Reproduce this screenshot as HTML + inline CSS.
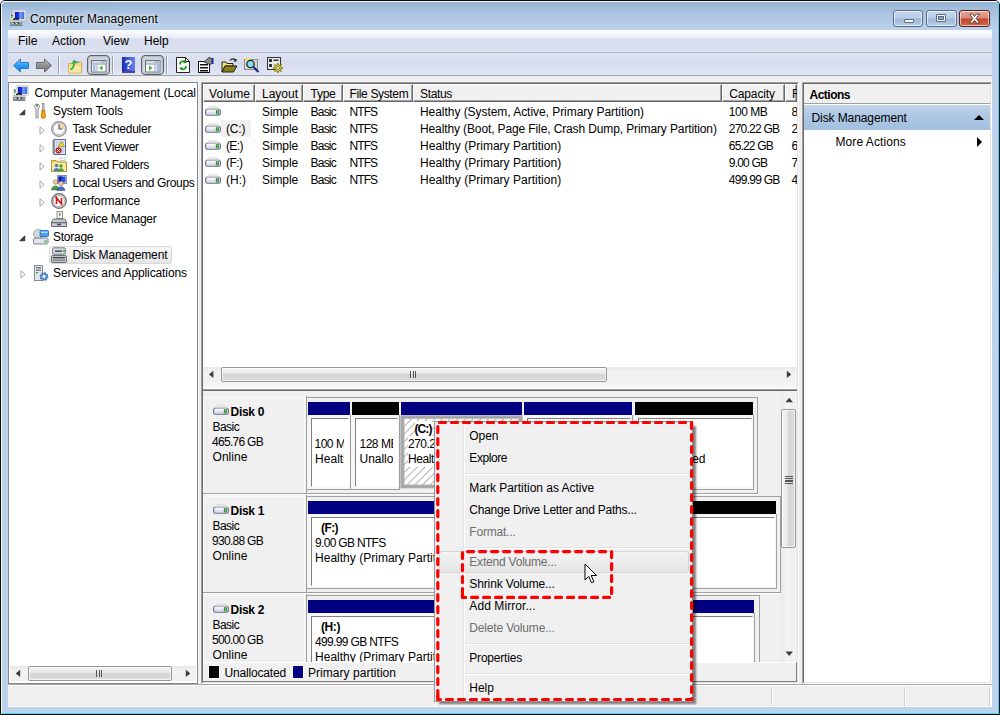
<!DOCTYPE html>
<html><head><meta charset="utf-8"><title>Computer Management</title>
<style>
*{box-sizing:border-box;margin:0;padding:0}
html,body{width:1000px;height:715px;overflow:hidden;background:#fff}
body{font-family:"Liberation Sans",sans-serif;font-size:12px;color:#000;position:relative}
.a{position:absolute}
.t{position:absolute;white-space:pre;line-height:16px;height:16px}
#frame{left:0;top:0;width:1000px;height:715px;border:1px solid #0a0a0a;border-radius:5px 5px 0 0;background:linear-gradient(#96b3d4 0,#a9c3e0 12px,#bdd2ea 30px,#bdd3ec 100%)}
#frame2{left:1px;top:1px;width:998px;height:713px;border:1px solid;border-color:rgba(255,255,255,.92) #46d8f6 #46d8f6 rgba(255,255,255,.92);border-radius:4px 4px 0 0}
#menubar{left:8px;top:30px;width:984px;height:22px;background:linear-gradient(#fdfdfe 0,#e9ecf6 8px,#d8ddee 9px,#dce1f0 100%)}
#mline{left:8px;top:52px;width:984px;height:1px;background:#b6bccc}
#toolbar{left:8px;top:53px;width:984px;height:22px;background:linear-gradient(#dde2f1,#d6dcee 50%,#e1e6f3)}
#tline{left:8px;top:75px;width:984px;height:1px;background:#a0a6b4}
#client{left:8px;top:76px;width:984px;height:631px;background:#f0f0f0}

.cap{top:10px;height:17px;border:1px solid #5b6f8a;border-radius:3px;box-shadow:inset 0 0 0 1px rgba(255,255,255,.6)}
.capb{background:linear-gradient(#c6d8ee 0,#b7cde8 48%,#9dbadb 52%,#b4cce7 100%)}
#cclose{background:linear-gradient(#e5a698 0,#d98978 48%,#c4452c 52%,#d4674b 100%);border-color:#5a1f1a}
.mi{top:33px;font-size:12px;line-height:16px;height:16px}

.tsep{top:56px;width:2px;height:18px;border-left:1px solid #9aa0b0;border-right:1px solid #f4f6fb}
.tbtn{top:55px;width:23px;height:20px;border:1px solid #5c6068;border-radius:4px;background:linear-gradient(#c9cdd6,#dfe2e8);box-shadow:inset 0 0 0 1px #b9bdc6}
.sunk{border:1px solid;border-color:#a0a0a0 #fff #fff #a0a0a0}
.sunk>i{position:absolute;left:0;top:0;right:0;bottom:0;border:1px solid;border-color:#696969 #e3e3e3 #e3e3e3 #696969;background:#fff;display:block}
.hsb{background:linear-gradient(#e9e9e9,#f3f3f3 40%,#f0f0f0)}
.hthumb{border:1px solid #979797;border-radius:2px;background:linear-gradient(#f4f4f4 0,#e6e6e6 45%,#d4d4d4 50%,#dcdcdc 100%);box-shadow:inset 0 0 0 1px rgba(255,255,255,.7)}
.vthumb{border:1px solid #979797;border-radius:2px;background:linear-gradient(90deg,#f4f4f4 0,#e6e6e6 45%,#d4d4d4 50%,#dcdcdc 100%);box-shadow:inset 0 0 0 1px rgba(255,255,255,.7)}
.grip{background:repeating-linear-gradient(90deg,#555 0,#555 1.400px,transparent 1.400px,transparent 2.500px)}
.vgrip{background:repeating-linear-gradient(180deg,#555 0,#555 1.200px,transparent 1.200px,transparent 2.200px)}
.arr{width:0;height:0;border:4px solid transparent}
.hd{top:84px;height:18px;background:#f0f0f0;border:1px solid;border-color:#fff #696969 #696969 #fff;box-shadow:inset -1px -1px 0 #a0a0a0}
.bar{height:13px}
.pc{background:#f6f6f6;border:1px solid #a0a0a0;border-top:0;border-left:0}
.pi{background:#fff;border:1px solid;border-color:#808080 #fff #fff #808080}
.clip{position:absolute;overflow:hidden}
.ln{background:#a0a0a0}
</style></head><body>
<div class="a" id="frame"></div><div class="a" id="frame2"></div>
<div class="a" id="menubar"></div><div class="a" id="mline"></div>
<div class="a" id="toolbar"></div><div class="a" id="tline"></div>
<div class="a" id="client"></div>
<!-- title -->
<svg class="a" style="left:10px;top:10px" width="16" height="16" viewBox="0 0 16 16"><defs><linearGradient id="gscr0" x1="0" y1="0" x2="1" y2="0"><stop offset="0" stop-color="#0a1ab4"/><stop offset=".4" stop-color="#1c3ce0"/><stop offset=".55" stop-color="#7aa0f4"/><stop offset="1" stop-color="#3a62e6"/></linearGradient></defs><rect x="3.200" y=".2" width="12.600" height="10.200" rx=".6" fill="#e9e6dc" stroke="#c9c5b9" stroke-width=".5"/><rect x="4.900" y="1.900" width="9.300" height="7.100" fill="url(#gscr0)"/><rect x=".3" y="4.200" width="3" height="6" fill="#e2e2e2"/><rect x="1" y="4.600" width="1.500" height="1.900" fill="#444"/><rect x=".9" y="6.700" width="2.100" height="1.300" fill="#30e030"/><path d="M3.200 9.900Q5.800 7.500 8.600 9.900" fill="none" stroke="#111" stroke-width="1.300"/><rect x="0" y="10.300" width="12.300" height="5.500" fill="#8c9696"/><rect x="0" y="10.300" width="12.300" height="1.700" fill="#c6cece"/><rect x="3.600" y="12.200" width="1.300" height="2" fill="#2e2e2e"/><rect x="7.600" y="12.200" width="1.300" height="2" fill="#2e2e2e"/><rect x="2.300" y="13" width="1.200" height="1" fill="#eee"/><rect x="6.200" y="13" width="1.200" height="1" fill="#eee"/><rect x="0" y="15.200" width="12.300" height=".6" fill="#5a6a8a"/></svg>
<div class="t" style="left:30px;top:11px;font-size:12px;line-height:16px;height:16px;letter-spacing:.1px;text-shadow:0 0 6px rgba(255,255,255,.9),0 0 3px rgba(255,255,255,.8)">Computer Management</div>
<div class="a cap capb" style="left:893px;width:30px"><div class="a" style="left:10px;top:8px;width:10px;height:4px;background:#fff;border:1px solid #5a6a80;border-radius:1px"></div></div>
<div class="a cap capb" style="left:926px;width:31px"><div class="a" style="left:9px;top:3px;width:10px;height:8px;background:#fff;border:1px solid #5a6a80;border-radius:1px"></div><div class="a" style="left:12px;top:6px;width:4px;height:2px;background:#8aa3c4;border:1px solid #5a6a80;box-sizing:content-box;left:11px;top:5px"></div></div>
<div class="a cap" id="cclose" style="left:959px;width:31px"><svg class="a" style="left:8px;top:2px" width="13" height="11" viewBox="0 0 13 11"><path d="M1.5 1h3l2 2.6 2-2.6h3l-3.4 4.4 3.6 4.6h-3.2l-2-2.7-2 2.7H1.300l3.600-4.600z" fill="#fff" stroke="#5a3a3a" stroke-width=".9"/></svg></div>
<!-- menu -->
<div class="t mi" style="left:18px">File</div>
<div class="t mi" style="left:52px">Action</div>
<div class="t mi" style="left:103px">View</div>
<div class="t mi" style="left:144px">Help</div>
<!-- toolbar -->

<svg class="a" style="left:12px;top:57px" width="18" height="17" viewBox="0 0 18 17"><defs><linearGradient id="gb" x1="0" y1="0" x2="0" y2="1"><stop offset="0" stop-color="#8fd0ff"/><stop offset=".5" stop-color="#2e9bf0"/><stop offset="1" stop-color="#1a74d8"/></linearGradient><linearGradient id="gg" x1="0" y1="0" x2="0" y2="1"><stop offset="0" stop-color="#c8c8c8"/><stop offset=".5" stop-color="#8e8e8e"/><stop offset="1" stop-color="#7a7a7a"/></linearGradient></defs><path d="M1.500 8.500L8.500 2v3.500h8v6h-8V15z" fill="url(#gb)" stroke="#2a7fd0" stroke-width="1"/></svg>
<svg class="a" style="left:35px;top:57px" width="18" height="17" viewBox="0 0 18 17"><path d="M16.500 8.500L9.500 2v3.500h-8v6h8V15z" fill="url(#gg)" stroke="#6a6a6a" stroke-width="1"/></svg>
<div class="a tsep" style="left:58px"></div>
<svg class="a" style="left:68px;top:57px" width="15" height="17" viewBox="0 0 15 17"><path d="M.5 6.500h4.500l1-1.500h7.500v11H.500z" fill="#f3d98a" stroke="#d4b050" stroke-width="1"/><path d="M1 9h12v6.500H1z" fill="#f8e6a8"/><path d="M2.500 12.500c2-1 3.500-3 3.500-6" fill="none" stroke="#35b030" stroke-width="1.800"/><path d="M3.200 6.800L6.200 2.500l3.300 3.800z" fill="#35b030"/><path d="M7 4.500l4 .8" stroke="#4a90e0" stroke-width="1.200"/></svg>
<div class="a tbtn" style="left:87px"></div>
<svg class="a" style="left:91px;top:59px" width="16" height="14" viewBox="0 0 16 14"><rect x=".5" y="1.500" width="14.500" height="11.500" fill="#fff" stroke="#6a7280"/><rect x="1" y="2" width="13.500" height="2.500" fill="#d5d9e2"/><rect x="1" y="4.500" width="13.500" height="1" fill="#8a92a2"/><rect x="10.500" y="2.500" width="1" height="1" fill="#556"/><rect x="12.500" y="2.500" width="1" height="1" fill="#556"/><rect x="5.500" y="5.500" width="1" height="7" fill="#9aa2b2"/><rect x="2" y="6.500" width="2.500" height="1" fill="#3a7ad8"/><rect x="2" y="8.500" width="2.500" height="1" fill="#3a7ad8"/><rect x="2" y="10.500" width="2.500" height="1" fill="#3a7ad8"/><path d="M11.500 6.500v5L8 9z" fill="#3cb034"/></svg>
<div class="a tsep" style="left:112px"></div>
<svg class="a" style="left:122px;top:57px" width="14" height="16" viewBox="0 0 14 16"><defs><linearGradient id="gh" x1="0" y1="0" x2="1" y2="0"><stop offset="0" stop-color="#1a2aa8"/><stop offset=".5" stop-color="#3a5ae0"/><stop offset="1" stop-color="#6a86f0"/></linearGradient></defs><rect x="0" y="0" width="13" height="15" fill="url(#gh)"/><rect x="0" y="14" width="13" height="2" fill="#5a3a9a"/><text x="6.500" y="12" font-family="Liberation Sans,sans-serif" font-weight="bold" font-size="13" fill="#fff" text-anchor="middle">?</text></svg>
<div class="a tbtn" style="left:141px"></div>
<svg class="a" style="left:145px;top:59px" width="16" height="14" viewBox="0 0 16 14"><rect x=".5" y="1.500" width="14.500" height="11.500" fill="#fff" stroke="#6a7280"/><rect x="1" y="2" width="13.500" height="2.500" fill="#d5d9e2"/><rect x="1" y="4.500" width="13.500" height="1" fill="#8a92a2"/><rect x="10.500" y="2.500" width="1" height="1" fill="#556"/><rect x="12.500" y="2.500" width="1" height="1" fill="#556"/><rect x="9.500" y="5.500" width="1" height="7" fill="#9aa2b2"/><rect x="11.500" y="6.500" width="2.500" height="1" fill="#3a7ad8"/><rect x="11.500" y="8.500" width="2.500" height="1" fill="#3a7ad8"/><rect x="11.500" y="10.500" width="2.500" height="1" fill="#3a7ad8"/><path d="M4 6.500v5L7.500 9z" fill="#3cb034"/></svg>
<div class="a tsep" style="left:166px"></div>
<svg class="a" style="left:176px;top:57px" width="14" height="16" viewBox="0 0 14 16"><path d="M.5.500h9l4 4v11H.500z" fill="#fff" stroke="#222" stroke-width="1"/><path d="M9.500.500v4h4" fill="none" stroke="#222"/><path d="M4 7.500a3 3 0 0 1 5-2.500" fill="none" stroke="#1a9a1a" stroke-width="1.800"/><path d="M8 3l3 2.500-3.500 1z" fill="#1a9a1a"/><path d="M10 9a3 3 0 0 1-5 2.500" fill="none" stroke="#1a9a1a" stroke-width="1.800"/><path d="M6 13.500L3 11l3.500-1z" fill="#1a9a1a"/></svg>
<svg class="a" style="left:198px;top:57px" width="16" height="16" viewBox="0 0 16 16"><rect x=".5" y="4.500" width="11" height="11" fill="#fff" stroke="#111"/><rect x="2" y="7" width="8" height="1.500" fill="#111"/><rect x="2" y="10" width="8" height="1.500" fill="#111"/><rect x="2" y="13" width="8" height="1.500" fill="#111"/><path d="M6 5l5-4.500 3 1v5l-2 1z" fill="#8a8a8a" stroke="#222" stroke-width=".8"/><rect x="14" y="1" width="1.500" height="6" fill="#1030c0"/></svg>
<svg class="a" style="left:221px;top:57px" width="17" height="16" viewBox="0 0 17 16"><path d="M1 5h4l1 1.500h6V9H4l-3 6z" fill="#f4e27a" stroke="#222" stroke-width="1"/><path d="M4 9h12l-3.500 6H1z" fill="#8a8020" stroke="#222" stroke-width="1"/><path d="M9 3.500c2-2.500 4.500-2 5.500 0" fill="none" stroke="#111" stroke-width="1.200"/><path d="M15.500 1.500v3h-3z" fill="#111"/></svg>
<svg class="a" style="left:244px;top:57px" width="16" height="16" viewBox="0 0 16 16"><rect x=".5" y="2.500" width="13" height="10" fill="#d8d8c8" stroke="#8a8a8a"/><rect x="1" y="1" width="6" height="2" fill="#e8e070"/><circle cx="6.500" cy="7" r="3.700" fill="#80e0f0" stroke="#222" stroke-width="1.200"/><path d="M9.500 10l5 5" stroke="#1020a0" stroke-width="2"/></svg>
<svg class="a" style="left:267px;top:57px" width="17" height="16" viewBox="0 0 17 16"><rect x=".5" y=".5" width="13" height="12" fill="#e8e8e8" stroke="#333"/><rect x="2" y="2" width="3" height="3" fill="#333"/><rect x="6.500" y="2.500" width="5" height="1.500" fill="#333"/><rect x="2" y="7" width="3" height="3" fill="#333"/><path d="M11 6l1 2.500 2.500-1-1 2.500 2.500 1-2.500 1 1 2.500-2.500-1-1 2.500-1-2.500-2.500 1 1-2.500-2.500-1 2.500-1-1-2.500 2.500 1z" fill="#f0e020" stroke="#6a6000" stroke-width=".7"/><circle cx="11" cy="11" r="1.500" fill="#fff" stroke="#333" stroke-width=".6"/></svg>


<div class="a" style="left:8px;top:82px;width:190px;height:602px;border:1px solid #828790;background:#fff"></div>
<div class="t" style="left:34.5px;top:85px;letter-spacing:-0.022px;">Computer Management (Local</div>
<svg class="a" style="left:13px;top:84.5px" width="16" height="16" viewBox="0 0 16 16"><defs><linearGradient id="gscr" x1="0" y1="0" x2="1" y2="0"><stop offset="0" stop-color="#0a1ab4"/><stop offset=".4" stop-color="#1c3ce0"/><stop offset=".55" stop-color="#7aa0f4"/><stop offset="1" stop-color="#3a62e6"/></linearGradient></defs><rect x="3.200" y=".2" width="12.600" height="10.200" rx=".6" fill="#e9e6dc" stroke="#c9c5b9" stroke-width=".5"/><rect x="4.900" y="1.900" width="9.300" height="7.100" fill="url(#gscr)"/><rect x=".3" y="4.200" width="3" height="6" fill="#e2e2e2"/><rect x="1" y="4.600" width="1.500" height="1.900" fill="#444"/><rect x=".9" y="6.700" width="2.100" height="1.300" fill="#30e030"/><path d="M3.200 9.900Q5.800 7.500 8.600 9.900" fill="none" stroke="#111" stroke-width="1.300"/><rect x="0" y="10.300" width="12.300" height="5.500" fill="#8c9696"/><rect x="0" y="10.300" width="12.300" height="1.700" fill="#c6cece"/><rect x="3.600" y="12.200" width="1.300" height="2" fill="#2e2e2e"/><rect x="7.600" y="12.200" width="1.300" height="2" fill="#2e2e2e"/><rect x="2.300" y="13" width="1.200" height="1" fill="#eee"/><rect x="6.200" y="13" width="1.200" height="1" fill="#eee"/><rect x="0" y="15.200" width="12.300" height=".6" fill="#5a6a8a"/></svg>
<div class="t" style="left:53px;top:103px;letter-spacing:-0.103px;">System Tools</div>
<svg class="a" style="left:33px;top:102.5px" width="16" height="16" viewBox="0 0 16 16"><path d="M3.500 1C2 1.500 1.200 3 1.800 4.500L3 6v8.500c0 .8 2 .8 2 0V6l1.200-1.500C6.800 3 6 1.500 4.500 1v2.500h-1z" fill="#f4f4f4" stroke="#7a7a7a" stroke-width=".9"/><rect x="9.500" y=".5" width="1.600" height="7" fill="#d0d0d0" stroke="#707070" stroke-width=".6"/><path d="M8.800 7.500h3v2l.5 1v4c0 1-4 1-4 0v-4l.5-1z" fill="#f0a010" stroke="#a86800" stroke-width=".7"/></svg>
<svg class="a" style="left:19px;top:109.3px" width="7" height="7" viewBox="0 0 7 7"><path d="M5.800 .8V5.800H.8z" fill="#404040" stroke="#262626" stroke-width=".8"/></svg>
<div class="t" style="left:72.5px;top:121px;letter-spacing:-0.239px;">Task Scheduler</div>
<svg class="a" style="left:51px;top:120.5px" width="16" height="16" viewBox="0 0 16 16"><circle cx="8" cy="8" r="7.300" fill="#e9e9ee" stroke="#8a8a8a" stroke-width="1.200"/><circle cx="8" cy="8" r="5.600" fill="#fdfdff" stroke="#b8b8c4" stroke-width=".8"/><path d="M8 8V2.400A5.600 5.600 0 0 1 13.600 8z" fill="#f3d9a0"/><path d="M8 3.500V8h3.500" fill="none" stroke="#4a5a8a" stroke-width="1.200"/></svg>
<svg class="a" style="left:39px;top:125.5px" width="7" height="9" viewBox="0 0 7 9"><path d="M1 .8L5.200 4.500 1 8.200z" fill="#fff" stroke="#a5a5a5" stroke-width="1"/></svg>
<div class="t" style="left:72.5px;top:139px;letter-spacing:-0.365px;">Event Viewer</div>
<svg class="a" style="left:51px;top:138.5px" width="16" height="16" viewBox="0 0 16 16"><rect x="3" y=".5" width="11.500" height="15" fill="#dfe8f8" stroke="#5a6a9a"/><rect x="1.500" y="1" width="2" height="14" fill="#8a8a8a"/><path d="M5 3h8M5 5h8M5 7h8M5 9h8M5 11h8M5 13h8" stroke="#9ab0e0" stroke-width=".8"/><path d="M10.500 2.500l3 5h-6z" fill="#f8d820" stroke="#a08000" stroke-width=".6"/><circle cx="7.500" cy="11.500" r="2.800" fill="#e03020" stroke="#901010" stroke-width=".6"/><path d="M6.300 10.300l2.400 2.400M8.700 10.300l-2.400 2.400" stroke="#fff" stroke-width="1"/></svg>
<svg class="a" style="left:39px;top:143.5px" width="7" height="9" viewBox="0 0 7 9"><path d="M1 .8L5.200 4.500 1 8.200z" fill="#fff" stroke="#a5a5a5" stroke-width="1"/></svg>
<div class="t" style="left:72.5px;top:157px;letter-spacing:-0.410px;">Shared Folders</div>
<svg class="a" style="left:51px;top:156.5px" width="16" height="16" viewBox="0 0 16 16"><path d="M.5 3.500h5l1.500 1.500h8.500v9.500H.500z" fill="#f2d675" stroke="#b8962e"/><path d="M1 6h14v8H1z" fill="#f9e9a0"/><circle cx="5.500" cy="8.500" r="1.800" fill="#4a7ad0"/><path d="M2.500 14c0-4 6-4 6 0z" fill="#4a7ad0"/><circle cx="10" cy="9" r="1.700" fill="#40a040"/><path d="M7.200 14c0-3.600 5.600-3.600 5.600 0z" fill="#40a040"/><rect x="9" y="1" width="5" height="2.500" fill="#fff" stroke="#7aa" stroke-width=".5"/></svg>
<svg class="a" style="left:39px;top:161.5px" width="7" height="9" viewBox="0 0 7 9"><path d="M1 .8L5.200 4.500 1 8.200z" fill="#fff" stroke="#a5a5a5" stroke-width="1"/></svg>
<div class="t" style="left:72.5px;top:175px;letter-spacing:-0.341px;">Local Users and Groups</div>
<svg class="a" style="left:51px;top:174.5px" width="16" height="16" viewBox="0 0 16 16"><rect x="6.500" y=".5" width="9" height="8" fill="#dfe6f2" stroke="#8793a8"/><rect x="7.500" y="1.500" width="7" height="6" fill="#2a4fe0"/><path d="M7.500 1.500h3.500l-2 6h-1.500z" fill="#0c1c9c"/><circle cx="4.500" cy="7" r="2.300" fill="#e8c8a0" stroke="#8a6a40" stroke-width=".5"/><path d="M.5 15c0-5.500 8-5.500 8 0z" fill="#4a9a4a" stroke="#2a6a2a" stroke-width=".5"/><circle cx="10" cy="8.500" r="2.200" fill="#e8c8a0" stroke="#8a6a40" stroke-width=".5"/><path d="M6.200 15.500c0-5 7.600-5 7.600 0z" fill="#4a6ac0" stroke="#2a3a8a" stroke-width=".5"/></svg>
<svg class="a" style="left:39px;top:179.5px" width="7" height="9" viewBox="0 0 7 9"><path d="M1 .8L5.200 4.500 1 8.200z" fill="#fff" stroke="#a5a5a5" stroke-width="1"/></svg>
<div class="t" style="left:72.5px;top:193px;letter-spacing:-0.109px;">Performance</div>
<svg class="a" style="left:51px;top:192.5px" width="16" height="16" viewBox="0 0 16 16"><circle cx="8" cy="8" r="7.300" fill="#d8d8d8" stroke="#6a6a6a" stroke-width="1.200"/><circle cx="8" cy="8" r="5.500" fill="#fff" stroke="#9a9a9a" stroke-width=".7"/><path d="M5.500 11V5l5 6V5" fill="none" stroke="#d01818" stroke-width="1.600"/><path d="M4 4.500l2-1" stroke="#d01818" stroke-width="1.200"/></svg>
<svg class="a" style="left:39px;top:197.5px" width="7" height="9" viewBox="0 0 7 9"><path d="M1 .8L5.200 4.500 1 8.200z" fill="#fff" stroke="#a5a5a5" stroke-width="1"/></svg>
<div class="t" style="left:72.5px;top:211px;letter-spacing:-0.241px;">Device Manager</div>
<svg class="a" style="left:51px;top:210.5px" width="16" height="16" viewBox="0 0 16 16"><rect x="6" y=".5" width="5.500" height="7" fill="#f0f0f0" stroke="#7a7a7a" stroke-width=".8"/><rect x="8" y="2" width="1.500" height="3" fill="#50b050"/><path d="M2.500 8h11l2 3v4.500H.500V11z" fill="#c8ccd2" stroke="#5a5f68" stroke-width=".9"/><rect x="1" y="11" width="14" height="1.300" fill="#6a7078"/><rect x="6" y="12.800" width="4" height="1.500" fill="#444"/></svg>
<div class="t" style="left:53px;top:229px;letter-spacing:-0.261px;">Storage</div>
<svg class="a" style="left:33px;top:228.5px" width="16" height="16" viewBox="0 0 16 16"><ellipse cx="5.500" cy="5" rx="5" ry="4.500" fill="#d8dce2" stroke="#8a9098" stroke-width=".8"/><ellipse cx="5.500" cy="5" rx="1.500" ry="1.300" fill="#fff" stroke="#9aa" stroke-width=".5"/><rect x="7" y="1.500" width="8.500" height="6" rx="1" fill="#4aa0e8" stroke="#1a60b0" stroke-width=".8"/><rect x="8" y="2.500" width="6.500" height="1.500" fill="#a8d8ff"/><rect x=".5" y="9" width="14.500" height="6" rx="1.500" fill="#e0e3e8" stroke="#70757e" stroke-width=".9"/><rect x="11.500" y="11.500" width="2" height="2" fill="#30b030"/></svg>
<svg class="a" style="left:19px;top:235.3px" width="7" height="7" viewBox="0 0 7 7"><path d="M5.800 .8V5.800H.8z" fill="#404040" stroke="#262626" stroke-width=".8"/></svg>
<div class="a " style="left:49px;top:246px;width:123px;height:18px;border:1px solid #d9d9d9;border-radius:3px;background:linear-gradient(#f8f8f8,#e5e5e5)"></div>
<div class="t" style="left:72.5px;top:247px;letter-spacing:-0.121px;">Disk Management</div>
<svg class="a" style="left:51px;top:246.5px" width="16" height="16" viewBox="0 0 16 16"><rect x="1.500" y=".8" width="13" height="6.500" rx="1.500" fill="#d4d7dc" stroke="#6e737c" stroke-width=".9"/><rect x="4" y="3.500" width="7" height="1.300" fill="#3a3a3a"/><rect x="12" y="3" width="1.800" height="1.800" fill="#30b030"/><rect x=".5" y="8.500" width="15" height="7" rx="1.500" fill="#c4c8ce" stroke="#5e636c" stroke-width=".9"/><rect x="2" y="10" width="12" height="1.400" fill="#4a4a4a"/><rect x="2" y="12.600" width="12" height="1.400" fill="#8a8a8a"/></svg>
<div class="t" style="left:53px;top:265px;letter-spacing:-0.114px;">Services and Applications</div>
<svg class="a" style="left:33px;top:264.5px" width="16" height="16" viewBox="0 0 16 16"><rect x="1.500" y=".5" width="8" height="15" fill="#e4e7ec" stroke="#7a8088" stroke-width=".9"/><rect x="3" y="2" width="5" height="1.300" fill="#6a7078"/><rect x="3" y="4.500" width="5" height="1.300" fill="#6a7078"/><rect x="3" y="7" width="2" height="1.300" fill="#30a030"/><circle cx="11" cy="11.500" r="3.600" fill="#6a9ad8" stroke="#3a6ab0" stroke-width="1.600" stroke-dasharray="1.600 1.200"/><circle cx="11" cy="11.500" r="1.400" fill="#fff"/></svg>
<svg class="a" style="left:20px;top:269.5px" width="7" height="9" viewBox="0 0 7 9"><path d="M1 .8L5.200 4.500 1 8.200z" fill="#fff" stroke="#a5a5a5" stroke-width="1"/></svg>
<div class="a " style="left:10px;top:666px;width:186px;height:16px;background:#fff;"></div>
<div class="a hsb" style="left:10px;top:666px;width:186px;height:15px;"></div>
<div class="a hthumb" style="left:28px;top:666px;width:144px;height:15px;"></div>
<div class="a grip" style="left:96px;top:669.5px;width:6.4px;height:7.5px;"></div>
<svg class="a" style="left:14px;top:668px" width="12" height="12" viewBox="14 668 12 12"><polygon points="20.2,669.7 20.2,677.1 15.7,673.4" fill="#3c3c3c"/></svg>
<svg class="a" style="left:184px;top:668px" width="12" height="12" viewBox="184 668 12 12"><polygon points="185.8,669.7 185.8,677.1 190.3,673.4" fill="#3c3c3c"/></svg>
<div class="a sunk" style="left:201px;top:82px;width:598px;height:602px"><i></i></div>
<div class="a hd" style="left:203px;width:52px"></div>
<div class="t" style="left:209px;top:86px;letter-spacing:0.196px;">Volume</div>
<div class="a hd" style="left:255px;width:48px"></div>
<div class="t" style="left:262px;top:86px;letter-spacing:-0.005px;">Layout</div>
<div class="a hd" style="left:303px;width:40px"></div>
<div class="t" style="left:310.5px;top:86px;letter-spacing:-0.254px;">Type</div>
<div class="a hd" style="left:343px;width:70px"></div>
<div class="t" style="left:349.5px;top:86px;letter-spacing:-0.353px;">File System</div>
<div class="a hd" style="left:413px;width:309px"></div>
<div class="t" style="left:420px;top:86px;letter-spacing:-0.337px;">Status</div>
<div class="a hd" style="left:722px;width:63px"></div>
<div class="t" style="left:729.3px;top:86px;letter-spacing:-0.148px;">Capacity</div>
<div class="a hd" style="left:785px;width:12px"></div>
<div class="clip" style="left:791px;top:86px;width:6px;height:16px"><div class="t" style="left:1px;top:0px;">F</div></div>
<svg class="a" style="left:205px;top:106.3px" width="16" height="10" viewBox="0 0 16 10"><path d="M4.300 .7h7.400l3 2.800H1.300z" fill="#efefef" stroke="#cfcfcf" stroke-width=".6"/><rect x=".6" y="3.400" width="14.800" height="5.800" rx="1.700" fill="#dcdfee" stroke="#6c7084" stroke-width="1.100"/><rect x="1.800" y="4.100" width="9" height="1.600" fill="#f8f8fc"/><rect x="1.600" y="2.900" width="12.800" height="1" fill="#c4c4c8"/><rect x="10.900" y="4.300" width="2.900" height="4" rx=".5" fill="#4a4a60"/><rect x="11.600" y="4.300" width="1.500" height="4" fill="#36e822"/></svg>
<div class="t" style="left:262px;top:104px;letter-spacing:-0.113px;">Simple</div>
<div class="t" style="left:310.5px;top:104px;letter-spacing:-0.769px;">Basic</div>
<div class="t" style="left:349.5px;top:104px;letter-spacing:-0.932px;">NTFS</div>
<div class="t" style="left:420px;top:104px;letter-spacing:-0.048px;">Healthy (System, Active, Primary Partition)</div>
<div class="t" style="left:728.8px;top:104px;letter-spacing:-0.493px;">100 MB</div>
<div class="clip" style="left:791px;top:104px;width:6px;height:16px"><div class="t" style="left:0.5px;top:0px;">8</div></div>
<div class="a " style="left:221px;top:120px;width:30px;height:17px;background:#f0f0f0;"></div>
<svg class="a" style="left:205px;top:123.3px" width="16" height="10" viewBox="0 0 16 10"><path d="M4.300 .7h7.400l3 2.800H1.300z" fill="#efefef" stroke="#cfcfcf" stroke-width=".6"/><rect x=".6" y="3.400" width="14.800" height="5.800" rx="1.700" fill="#dcdfee" stroke="#6c7084" stroke-width="1.100"/><rect x="1.800" y="4.100" width="9" height="1.600" fill="#f8f8fc"/><rect x="1.600" y="2.900" width="12.800" height="1" fill="#c4c4c8"/><rect x="10.900" y="4.300" width="2.900" height="4" rx=".5" fill="#4a4a60"/><rect x="11.600" y="4.300" width="1.500" height="4" fill="#36e822"/></svg>
<div class="t" style="left:226px;top:121px;letter-spacing:-0.198px;">(C:)</div>
<div class="t" style="left:262px;top:121px;letter-spacing:-0.113px;">Simple</div>
<div class="t" style="left:310.5px;top:121px;letter-spacing:-0.769px;">Basic</div>
<div class="t" style="left:349.5px;top:121px;letter-spacing:-0.932px;">NTFS</div>
<div class="t" style="left:420px;top:121px;letter-spacing:-0.119px;">Healthy (Boot, Page File, Crash Dump, Primary Partition)</div>
<div class="t" style="left:728.8px;top:121px;letter-spacing:-0.775px;">270.22 GB</div>
<div class="clip" style="left:791px;top:121px;width:6px;height:16px"><div class="t" style="left:0.5px;top:0px;">2</div></div>
<svg class="a" style="left:205px;top:140.3px" width="16" height="10" viewBox="0 0 16 10"><path d="M4.300 .7h7.400l3 2.800H1.300z" fill="#efefef" stroke="#cfcfcf" stroke-width=".6"/><rect x=".6" y="3.400" width="14.800" height="5.800" rx="1.700" fill="#dcdfee" stroke="#6c7084" stroke-width="1.100"/><rect x="1.800" y="4.100" width="9" height="1.600" fill="#f8f8fc"/><rect x="1.600" y="2.900" width="12.800" height="1" fill="#c4c4c8"/><rect x="10.900" y="4.300" width="2.900" height="4" rx=".5" fill="#4a4a60"/><rect x="11.600" y="4.300" width="1.500" height="4" fill="#36e822"/></svg>
<div class="t" style="left:226px;top:138px;letter-spacing:-0.633px;">(E:)</div>
<div class="t" style="left:262px;top:138px;letter-spacing:-0.113px;">Simple</div>
<div class="t" style="left:310.5px;top:138px;letter-spacing:-0.769px;">Basic</div>
<div class="t" style="left:349.5px;top:138px;letter-spacing:-0.932px;">NTFS</div>
<div class="t" style="left:420px;top:138px;letter-spacing:0.018px;">Healthy (Primary Partition)</div>
<div class="t" style="left:728.8px;top:138px;letter-spacing:-0.838px;">65.22 GB</div>
<div class="clip" style="left:791px;top:138px;width:6px;height:16px"><div class="t" style="left:0.5px;top:0px;">6</div></div>
<svg class="a" style="left:205px;top:157.3px" width="16" height="10" viewBox="0 0 16 10"><path d="M4.300 .7h7.400l3 2.800H1.300z" fill="#efefef" stroke="#cfcfcf" stroke-width=".6"/><rect x=".6" y="3.400" width="14.800" height="5.800" rx="1.700" fill="#dcdfee" stroke="#6c7084" stroke-width="1.100"/><rect x="1.800" y="4.100" width="9" height="1.600" fill="#f8f8fc"/><rect x="1.600" y="2.900" width="12.800" height="1" fill="#c4c4c8"/><rect x="10.900" y="4.300" width="2.900" height="4" rx=".5" fill="#4a4a60"/><rect x="11.600" y="4.300" width="1.500" height="4" fill="#36e822"/></svg>
<div class="t" style="left:226px;top:155px;letter-spacing:-0.539px;">(F:)</div>
<div class="t" style="left:262px;top:155px;letter-spacing:-0.113px;">Simple</div>
<div class="t" style="left:310.5px;top:155px;letter-spacing:-0.769px;">Basic</div>
<div class="t" style="left:349.5px;top:155px;letter-spacing:-0.932px;">NTFS</div>
<div class="t" style="left:420px;top:155px;letter-spacing:0.018px;">Healthy (Primary Partition)</div>
<div class="t" style="left:728.8px;top:155px;letter-spacing:-0.804px;">9.00 GB</div>
<div class="clip" style="left:791px;top:155px;width:6px;height:16px"><div class="t" style="left:0.5px;top:0px;">7</div></div>
<svg class="a" style="left:205px;top:174.3px" width="16" height="10" viewBox="0 0 16 10"><path d="M4.300 .7h7.400l3 2.800H1.300z" fill="#efefef" stroke="#cfcfcf" stroke-width=".6"/><rect x=".6" y="3.400" width="14.800" height="5.800" rx="1.700" fill="#dcdfee" stroke="#6c7084" stroke-width="1.100"/><rect x="1.800" y="4.100" width="9" height="1.600" fill="#f8f8fc"/><rect x="1.600" y="2.900" width="12.800" height="1" fill="#c4c4c8"/><rect x="10.900" y="4.300" width="2.900" height="4" rx=".5" fill="#4a4a60"/><rect x="11.600" y="4.300" width="1.500" height="4" fill="#36e822"/></svg>
<div class="t" style="left:226px;top:172px;letter-spacing:0.002px;">(H:)</div>
<div class="t" style="left:262px;top:172px;letter-spacing:-0.113px;">Simple</div>
<div class="t" style="left:310.5px;top:172px;letter-spacing:-0.769px;">Basic</div>
<div class="t" style="left:349.5px;top:172px;letter-spacing:-0.932px;">NTFS</div>
<div class="t" style="left:420px;top:172px;letter-spacing:0.018px;">Healthy (Primary Partition)</div>
<div class="t" style="left:728.8px;top:172px;letter-spacing:-0.731px;">499.99 GB</div>
<div class="clip" style="left:791px;top:172px;width:6px;height:16px"><div class="t" style="left:0.5px;top:0px;">4</div></div>
<div class="a hsb" style="left:203px;top:367px;width:594px;height:15px;"></div>
<div class="a hthumb" style="left:221px;top:367px;width:386px;height:15px;"></div>
<div class="a grip" style="left:410.3px;top:370.5px;width:6.4px;height:7.5px;"></div>
<svg class="a" style="left:207px;top:369px" width="12" height="12" viewBox="207 369 12 12"><polygon points="213.4,370.7 213.4,378.1 208.9,374.4" fill="#3c3c3c"/></svg>
<svg class="a" style="left:785px;top:369px" width="12" height="12" viewBox="785 369 12 12"><polygon points="786.8,370.7 786.8,378.1 791.3,374.4" fill="#3c3c3c"/></svg>
<div class="a " style="left:203px;top:382px;width:594px;height:300px;background:#f0f0f0;"></div>
<div class="a " style="left:203px;top:382px;width:594px;height:4px;background:#f3f3f3;"></div>
<div class="a " style="left:203px;top:386px;width:594px;height:3px;background:#f8f8f8;"></div>
<div class="a " style="left:203px;top:389px;width:594px;height:1px;background:#a0a0a0;"></div>
<div class="a " style="left:203px;top:390px;width:594px;height:1px;background:#696969;"></div>
<div class="clip" style="left:0;top:391px;width:781px;height:271px"><div class="a" style="left:0;top:-391px"><svg class="a" style="left:213px;top:404.7px" width="16" height="10" viewBox="0 0 16 10"><path d="M4.300 .7h7.400l3 2.800H1.300z" fill="#efefef" stroke="#cfcfcf" stroke-width=".6"/><rect x=".6" y="3.400" width="14.800" height="5.800" rx="1.700" fill="#dcdfee" stroke="#6c7084" stroke-width="1.100"/><rect x="1.800" y="4.100" width="9" height="1.600" fill="#f8f8fc"/><rect x="1.600" y="2.900" width="12.800" height="1" fill="#c4c4c8"/><rect x="10.900" y="4.300" width="2.900" height="4" rx=".5" fill="#4a4a60"/><rect x="11.600" y="4.300" width="1.500" height="4" fill="#36e822"/></svg><div class="t" style="left:230.5px;top:403.6px;letter-spacing:-0.276px;font-weight:bold;">Disk 0</div><div class="t" style="left:212.5px;top:419px;letter-spacing:-0.549px;">Basic</div><div class="t" style="left:212px;top:434px;letter-spacing:-0.708px;">465.76 GB</div><div class="t" style="left:212.5px;top:448.6px;letter-spacing:0.052px;">Online</div><div class="a " style="left:304px;top:396px;width:1px;height:98px;background:#fbfbfb;"></div><div class="a " style="left:203px;top:397px;width:101px;height:1px;background:#fafafa;"></div><div class="a " style="left:203px;top:397px;width:1px;height:96px;background:#fafafa;"></div><div class="a ln" style="left:306px;top:396px;width:1px;height:98px;"></div><div class="a ln" style="left:306px;top:397px;width:451px;height:1px;"></div><div class="a ln" style="left:757px;top:397px;width:1px;height:96px;"></div><div class="a ln" style="left:203px;top:493px;width:555px;height:1px;"></div><div class="a " style="left:203px;top:494px;width:555px;height:1px;background:#fff;"></div><div class="a " style="left:308px;top:402px;width:42px;height:13px;background:#000080;"></div><div class="a pc" style="left:307px;top:415px;width:44px;height:75px;"></div><div class="a pi" style="left:311px;top:418px;width:38px;height:69px;"></div><div class="clip" style="left:312px;top:419px;width:31.5px;height:67px"><div class="t" style="left:2.5px;top:16.5px;letter-spacing:-0.493px;">100 MB</div><div class="t" style="left:3px;top:32px;letter-spacing:0.045px;">Healthy</div></div><div class="a " style="left:352px;top:402px;width:47px;height:13px;background:#000;"></div><div class="a pc" style="left:351px;top:415px;width:49px;height:75px;"></div><div class="a pi" style="left:355px;top:418px;width:43px;height:69px;"></div><div class="clip" style="left:356px;top:419px;width:36.5px;height:67px"><div class="t" style="left:3.5px;top:16.5px;letter-spacing:-0.493px;">128 MB</div><div class="t" style="left:3.5px;top:32px;letter-spacing:-0.034px;">Unallocated</div></div><div class="a " style="left:401px;top:402px;width:121px;height:13px;background:#000080;"></div><svg class="a" style="left:400px;top:415px" width="124" height="76" viewBox="0 0 124 76"><defs><pattern id="hatch" width="7.700" height="7.700" patternUnits="userSpaceOnUse"><path d="M-1 8.700L8.700 -1M-1 1L1 -1M6.700 8.700L8.700 6.700" stroke="#7a7a7a" stroke-width=".85"/></pattern></defs><rect x=".4" y=".3" width="122.2" height="73" fill="#a8a8a8"/><rect x="4.400" y="3.800" width="114.2" height="65.800" fill="#fff"/><rect x="4.400" y="3.800" width="114.2" height="65.800" fill="url(#hatch)"/></svg><div class="clip" style="left:405px;top:419px;width:110.5px;height:67px"><div class="t" style="left:9.5px;top:2px;letter-spacing:-0.914px;font-weight:bold;background:#fff;">(C:)</div><div class="t" style="left:3px;top:16.5px;letter-spacing:-0.503px;background:#fff;">270.22 GB NTFS</div><div class="t" style="left:3px;top:32px;letter-spacing:-0.389px;background:#fff;">Healthy (Boot, Page</div></div><div class="a " style="left:524px;top:402px;width:108px;height:13px;background:#000080;"></div><div class="a pc" style="left:523px;top:415px;width:110px;height:75px;"></div><div class="a pi" style="left:527px;top:418px;width:104px;height:69px;"></div><div class="clip" style="left:528px;top:419px;width:97.5px;height:67px"><div class="t" style="left:9.5px;top:2px;letter-spacing:-0.749px;font-weight:bold;">(E:)</div><div class="t" style="left:3px;top:16.5px;letter-spacing:-0.413px;">65.22 GB NTFS</div><div class="t" style="left:3px;top:32px;letter-spacing:-0.038px;">Healthy (Primary P</div></div><div class="a " style="left:635px;top:402px;width:118px;height:13px;background:#000;"></div><div class="a pc" style="left:634px;top:415px;width:120px;height:75px;"></div><div class="a pi" style="left:638px;top:418px;width:114px;height:69px;"></div><div class="clip" style="left:639px;top:419px;width:107.5px;height:67px"><div class="t" style="left:3.5px;top:16.5px;letter-spacing:-0.931px;">130.09 GB</div><div class="t" style="left:3.5px;top:32px;letter-spacing:-0.034px;">Unallocated</div></div><svg class="a" style="left:213px;top:503.7px" width="16" height="10" viewBox="0 0 16 10"><path d="M4.300 .7h7.400l3 2.800H1.300z" fill="#efefef" stroke="#cfcfcf" stroke-width=".6"/><rect x=".6" y="3.400" width="14.800" height="5.800" rx="1.700" fill="#dcdfee" stroke="#6c7084" stroke-width="1.100"/><rect x="1.800" y="4.100" width="9" height="1.600" fill="#f8f8fc"/><rect x="1.600" y="2.900" width="12.800" height="1" fill="#c4c4c8"/><rect x="10.900" y="4.300" width="2.900" height="4" rx=".5" fill="#4a4a60"/><rect x="11.600" y="4.300" width="1.500" height="4" fill="#36e822"/></svg><div class="t" style="left:230.5px;top:502.6px;letter-spacing:-0.276px;font-weight:bold;">Disk 1</div><div class="t" style="left:212.5px;top:518px;letter-spacing:-0.549px;">Basic</div><div class="t" style="left:212px;top:533px;letter-spacing:-0.708px;">930.88 GB</div><div class="t" style="left:212.5px;top:547.6px;letter-spacing:0.052px;">Online</div><div class="a " style="left:304px;top:495px;width:1px;height:98px;background:#fbfbfb;"></div><div class="a " style="left:203px;top:496px;width:101px;height:1px;background:#fafafa;"></div><div class="a " style="left:203px;top:496px;width:1px;height:96px;background:#fafafa;"></div><div class="a ln" style="left:306px;top:495px;width:1px;height:98px;"></div><div class="a ln" style="left:306px;top:496px;width:474px;height:1px;"></div><div class="a ln" style="left:780px;top:496px;width:1px;height:96px;"></div><div class="a ln" style="left:203px;top:592px;width:578px;height:1px;"></div><div class="a " style="left:203px;top:593px;width:578px;height:1px;background:#fff;"></div><div class="a " style="left:308px;top:501px;width:252px;height:13px;background:#000080;"></div><div class="a pc" style="left:307px;top:514px;width:254px;height:75px;"></div><div class="a pi" style="left:311px;top:517px;width:248px;height:69px;"></div><div class="clip" style="left:312px;top:518px;width:241.5px;height:67px"><div class="t" style="left:9px;top:2px;letter-spacing:-0.580px;font-weight:bold;">(F:)</div><div class="t" style="left:3px;top:16.5px;letter-spacing:-0.683px;">9.00 GB NTFS</div><div class="t" style="left:3px;top:32px;letter-spacing:0.018px;">Healthy (Primary Partition)</div></div><div class="a " style="left:562px;top:501px;width:214px;height:13px;background:#000;"></div><div class="a pc" style="left:561px;top:514px;width:216px;height:75px;"></div><div class="a pi" style="left:565px;top:517px;width:210px;height:69px;"></div><div class="clip" style="left:566px;top:518px;width:203.5px;height:67px"><div class="t" style="left:3.5px;top:16.5px;letter-spacing:-0.597px;">921.88 GB</div><div class="t" style="left:3.5px;top:32px;letter-spacing:-0.034px;">Unallocated</div></div><svg class="a" style="left:213px;top:602.7px" width="16" height="10" viewBox="0 0 16 10"><path d="M4.300 .7h7.400l3 2.800H1.300z" fill="#efefef" stroke="#cfcfcf" stroke-width=".6"/><rect x=".6" y="3.400" width="14.800" height="5.800" rx="1.700" fill="#dcdfee" stroke="#6c7084" stroke-width="1.100"/><rect x="1.800" y="4.100" width="9" height="1.600" fill="#f8f8fc"/><rect x="1.600" y="2.900" width="12.800" height="1" fill="#c4c4c8"/><rect x="10.900" y="4.300" width="2.900" height="4" rx=".5" fill="#4a4a60"/><rect x="11.600" y="4.300" width="1.500" height="4" fill="#36e822"/></svg><div class="t" style="left:230.5px;top:601.6px;letter-spacing:-0.276px;font-weight:bold;">Disk 2</div><div class="t" style="left:212.5px;top:617px;letter-spacing:-0.549px;">Basic</div><div class="t" style="left:212px;top:632px;letter-spacing:-0.708px;">500.00 GB</div><div class="t" style="left:212.5px;top:646.6px;letter-spacing:0.052px;">Online</div><div class="a " style="left:304px;top:594px;width:1px;height:98px;background:#fbfbfb;"></div><div class="a " style="left:203px;top:595px;width:101px;height:1px;background:#fafafa;"></div><div class="a " style="left:203px;top:595px;width:1px;height:96px;background:#fafafa;"></div><div class="a ln" style="left:306px;top:594px;width:1px;height:98px;"></div><div class="a ln" style="left:306px;top:595px;width:453px;height:1px;"></div><div class="a ln" style="left:759px;top:595px;width:1px;height:96px;"></div><div class="a ln" style="left:203px;top:691px;width:557px;height:1px;"></div><div class="a " style="left:203px;top:692px;width:557px;height:1px;background:#fff;"></div><div class="a " style="left:308px;top:600px;width:446px;height:13px;background:#000080;"></div><div class="a pc" style="left:307px;top:613px;width:448px;height:75px;"></div><div class="a pi" style="left:311px;top:616px;width:442px;height:69px;"></div><div class="clip" style="left:312px;top:617px;width:435.5px;height:67px"><div class="t" style="left:9px;top:2px;letter-spacing:-0.414px;font-weight:bold;">(H:)</div><div class="t" style="left:3px;top:16.5px;letter-spacing:-0.646px;">499.99 GB NTFS</div><div class="t" style="left:3px;top:32px;letter-spacing:0.018px;">Healthy (Primary Partition)</div></div></div></div>
<div class="a " style="left:781px;top:391px;width:15px;height:271px;background:linear-gradient(90deg,#e9e9e9,#f3f3f3 40%,#f0f0f0)"></div>
<div class="a vthumb" style="left:781px;top:409px;width:15px;height:139px;"></div>
<div class="a vgrip" style="left:785.2px;top:475.8px;width:7.5px;height:7.8px;"></div>
<svg class="a" style="left:784px;top:396px" width="12" height="12" viewBox="784 396 12 12"><polygon points="785.5,402.2 792.9,402.2 789.2,397.7" fill="#3c3c3c"/></svg>
<svg class="a" style="left:784px;top:650px" width="12" height="12" viewBox="784 650 12 12"><polygon points="785.5,651.5 792.9,651.5 789.2,656" fill="#3c3c3c"/></svg>
<div class="a " style="left:203px;top:662px;width:594px;height:20px;background:#f0f0f0;border-right:1px solid #808080;border-bottom:1px solid #808080;border-top:1px solid #fff"></div>
<div class="a " style="left:208px;top:665px;width:12px;height:14px;background:#fff;"></div>
<div class="a " style="left:208.7px;top:665.7px;width:10.4px;height:12.2px;background:#000;"></div>
<div class="t" style="left:224.5px;top:664.5px;letter-spacing:-0.170px;">Unallocated</div>
<div class="a " style="left:292px;top:665px;width:12px;height:14px;background:#fff;"></div>
<div class="a " style="left:292.7px;top:665.7px;width:10.4px;height:12.2px;background:#000080;"></div>
<div class="t" style="left:308px;top:664.5px;letter-spacing:0.038px;">Primary partition</div>
<div class="a sunk" style="left:802px;top:82px;width:190px;height:602px"><i></i></div>
<div class="a " style="left:804px;top:84px;width:186px;height:19px;background:#f0f0f0;"></div>
<div class="a " style="left:804px;top:103px;width:186px;height:1px;background:#a0a0a0;"></div>
<div class="t" style="left:809.5px;top:86.5px;letter-spacing:-0.500px;font-weight:bold;">Actions</div>
<div class="a " style="left:804px;top:105px;width:186px;height:25px;background:linear-gradient(#c3d6ec 0,#afc8e5 40%,#a3bfdf 100%);"></div>
<div class="t" style="left:811.5px;top:110px;letter-spacing:-0.094px;">Disk Management</div>
<div class="t" style="left:835.5px;top:134px;letter-spacing:0.070px;">More Actions</div>
<div class="a arr" style="left:974px;top:110px;border-bottom-color:#000;border-width:5px 5px 5px 5px"></div>
<div class="a arr" style="left:977px;top:137px;border-left-color:#000;border-width:5px 0 5px 5px"></div>
<div class="a " style="left:8px;top:684px;width:984px;height:1px;background:#a6a6a6;"></div>
<div class="a " style="left:8px;top:685px;width:984px;height:1px;background:#fff;"></div>
<div class="a " style="left:8px;top:686px;width:984px;height:20px;background:#f0eeee;"></div>
<div class="a " style="left:8px;top:706px;width:984px;height:1px;background:#fff;"></div>
<div class="a " style="left:771px;top:687px;width:1px;height:19px;background:#d0d0d0;"></div>
<div class="a " style="left:772px;top:687px;width:1px;height:19px;background:#fff;"></div>
<div class="a " style="left:904px;top:687px;width:1px;height:19px;background:#d0d0d0;"></div>
<div class="a " style="left:905px;top:687px;width:1px;height:19px;background:#fff;"></div>
<div class="a " style="left:989px;top:687px;width:1px;height:19px;background:#d0d0d0;"></div>
<div class="a " style="left:990px;top:687px;width:2px;height:19px;background:#fff;"></div>
<div class="a " style="left:438px;top:425px;width:255px;height:276px;box-shadow:2px 2px 2px 1px rgba(0,0,0,.5)"></div>
<div class="a " style="left:434px;top:421px;width:259px;height:281px;background:#f0f0f0;border:1px solid #979797"></div>
<div class="a " style="left:463px;top:424px;width:1px;height:275px;background:#e2e3e3;"></div>
<div class="a " style="left:464px;top:424px;width:1px;height:275px;background:#fff;"></div>
<div class="a " style="left:439px;top:551px;width:250px;height:22px;border:1px solid #d4d4d4;border-radius:3px;background:linear-gradient(#f4f4f4,#e4e4e4)"></div>
<div class="a " style="left:465px;top:473px;width:225px;height:1px;background:#e0e0e0;"></div>
<div class="a " style="left:465px;top:474px;width:225px;height:1px;background:#fff;"></div>
<div class="a " style="left:465px;top:547px;width:225px;height:1px;background:#e0e0e0;"></div>
<div class="a " style="left:465px;top:548px;width:225px;height:1px;background:#fff;"></div>
<div class="a " style="left:465px;top:643px;width:225px;height:1px;background:#e0e0e0;"></div>
<div class="a " style="left:465px;top:644px;width:225px;height:1px;background:#fff;"></div>
<div class="a " style="left:465px;top:673px;width:225px;height:1px;background:#e0e0e0;"></div>
<div class="a " style="left:465px;top:674px;width:225px;height:1px;background:#fff;"></div>
<div class="t" style="left:469.3px;top:427.5px;letter-spacing:-0.089px;">Open</div>
<div class="t" style="left:469.3px;top:449.5px;letter-spacing:-0.413px;">Explore</div>
<div class="t" style="left:469.3px;top:479.5px;letter-spacing:-0.024px;">Mark Partition as Active</div>
<div class="t" style="left:469.3px;top:501.5px;letter-spacing:-0.233px;">Change Drive Letter and Paths...</div>
<div class="t" style="left:469.3px;top:523.5px;letter-spacing:-0.179px;color:#6d6d6d;">Format...</div>
<div class="t" style="left:469.3px;top:553.5px;letter-spacing:-0.208px;color:#6d6d6d;">Extend Volume...</div>
<div class="t" style="left:469.3px;top:575.5px;letter-spacing:-0.124px;">Shrink Volume...</div>
<div class="t" style="left:469.3px;top:597.5px;letter-spacing:0.081px;">Add Mirror...</div>
<div class="t" style="left:469.3px;top:619.5px;letter-spacing:-0.166px;color:#6d6d6d;">Delete Volume...</div>
<div class="t" style="left:469.3px;top:649.5px;letter-spacing:-0.199px;">Properties</div>
<div class="t" style="left:469.3px;top:679.5px;letter-spacing:-0.045px;">Help</div>
<svg class="a" style="left:430px;top:415px" width="270" height="292" viewBox="430 415 270 292"><g fill="none" stroke="#f00" stroke-width="3.200" stroke-linecap="round" stroke-dasharray="6 6"><path d="M437.8 422.5L691.6 422.5" stroke-dashoffset="-1.7"/><path d="M691.6 422.5L691.6 699.5" stroke-dashoffset="0"/><path d="M691.6 699.5L437.8 699.5" stroke-dashoffset="0.9"/><path d="M437.8 422.5L437.8 699.5" stroke-dashoffset="-4.1"/><path d="M462.5 551.6L611.6 551.6" stroke-dashoffset="-5.1"/><path d="M611.6 551.6L611.6 595.9" stroke-dashoffset="0"/><path d="M462.5 597.4L611.6 597.4" stroke-dashoffset="2.9"/><path d="M462.5 551.6L462.5 597.4" stroke-dashoffset="-0.9"/></g><g fill="none" stroke="#f00" stroke-width="3.200" stroke-linecap="round"><path d="M437.8 699.5L437.8 696.4"/><path d="M462.5 597.4L462.5 594.4"/></g></svg>
<svg class="a" style="left:584px;top:563px" width="14" height="22" viewBox="0 0 14 22"><path d="M1 1v16l3.800-3.600 2.700 6.300 2.400-1-2.700-6.200H12.500z" fill="#fff" stroke="#000" stroke-width="1" stroke-linejoin="miter"/></svg>
</body></html>
